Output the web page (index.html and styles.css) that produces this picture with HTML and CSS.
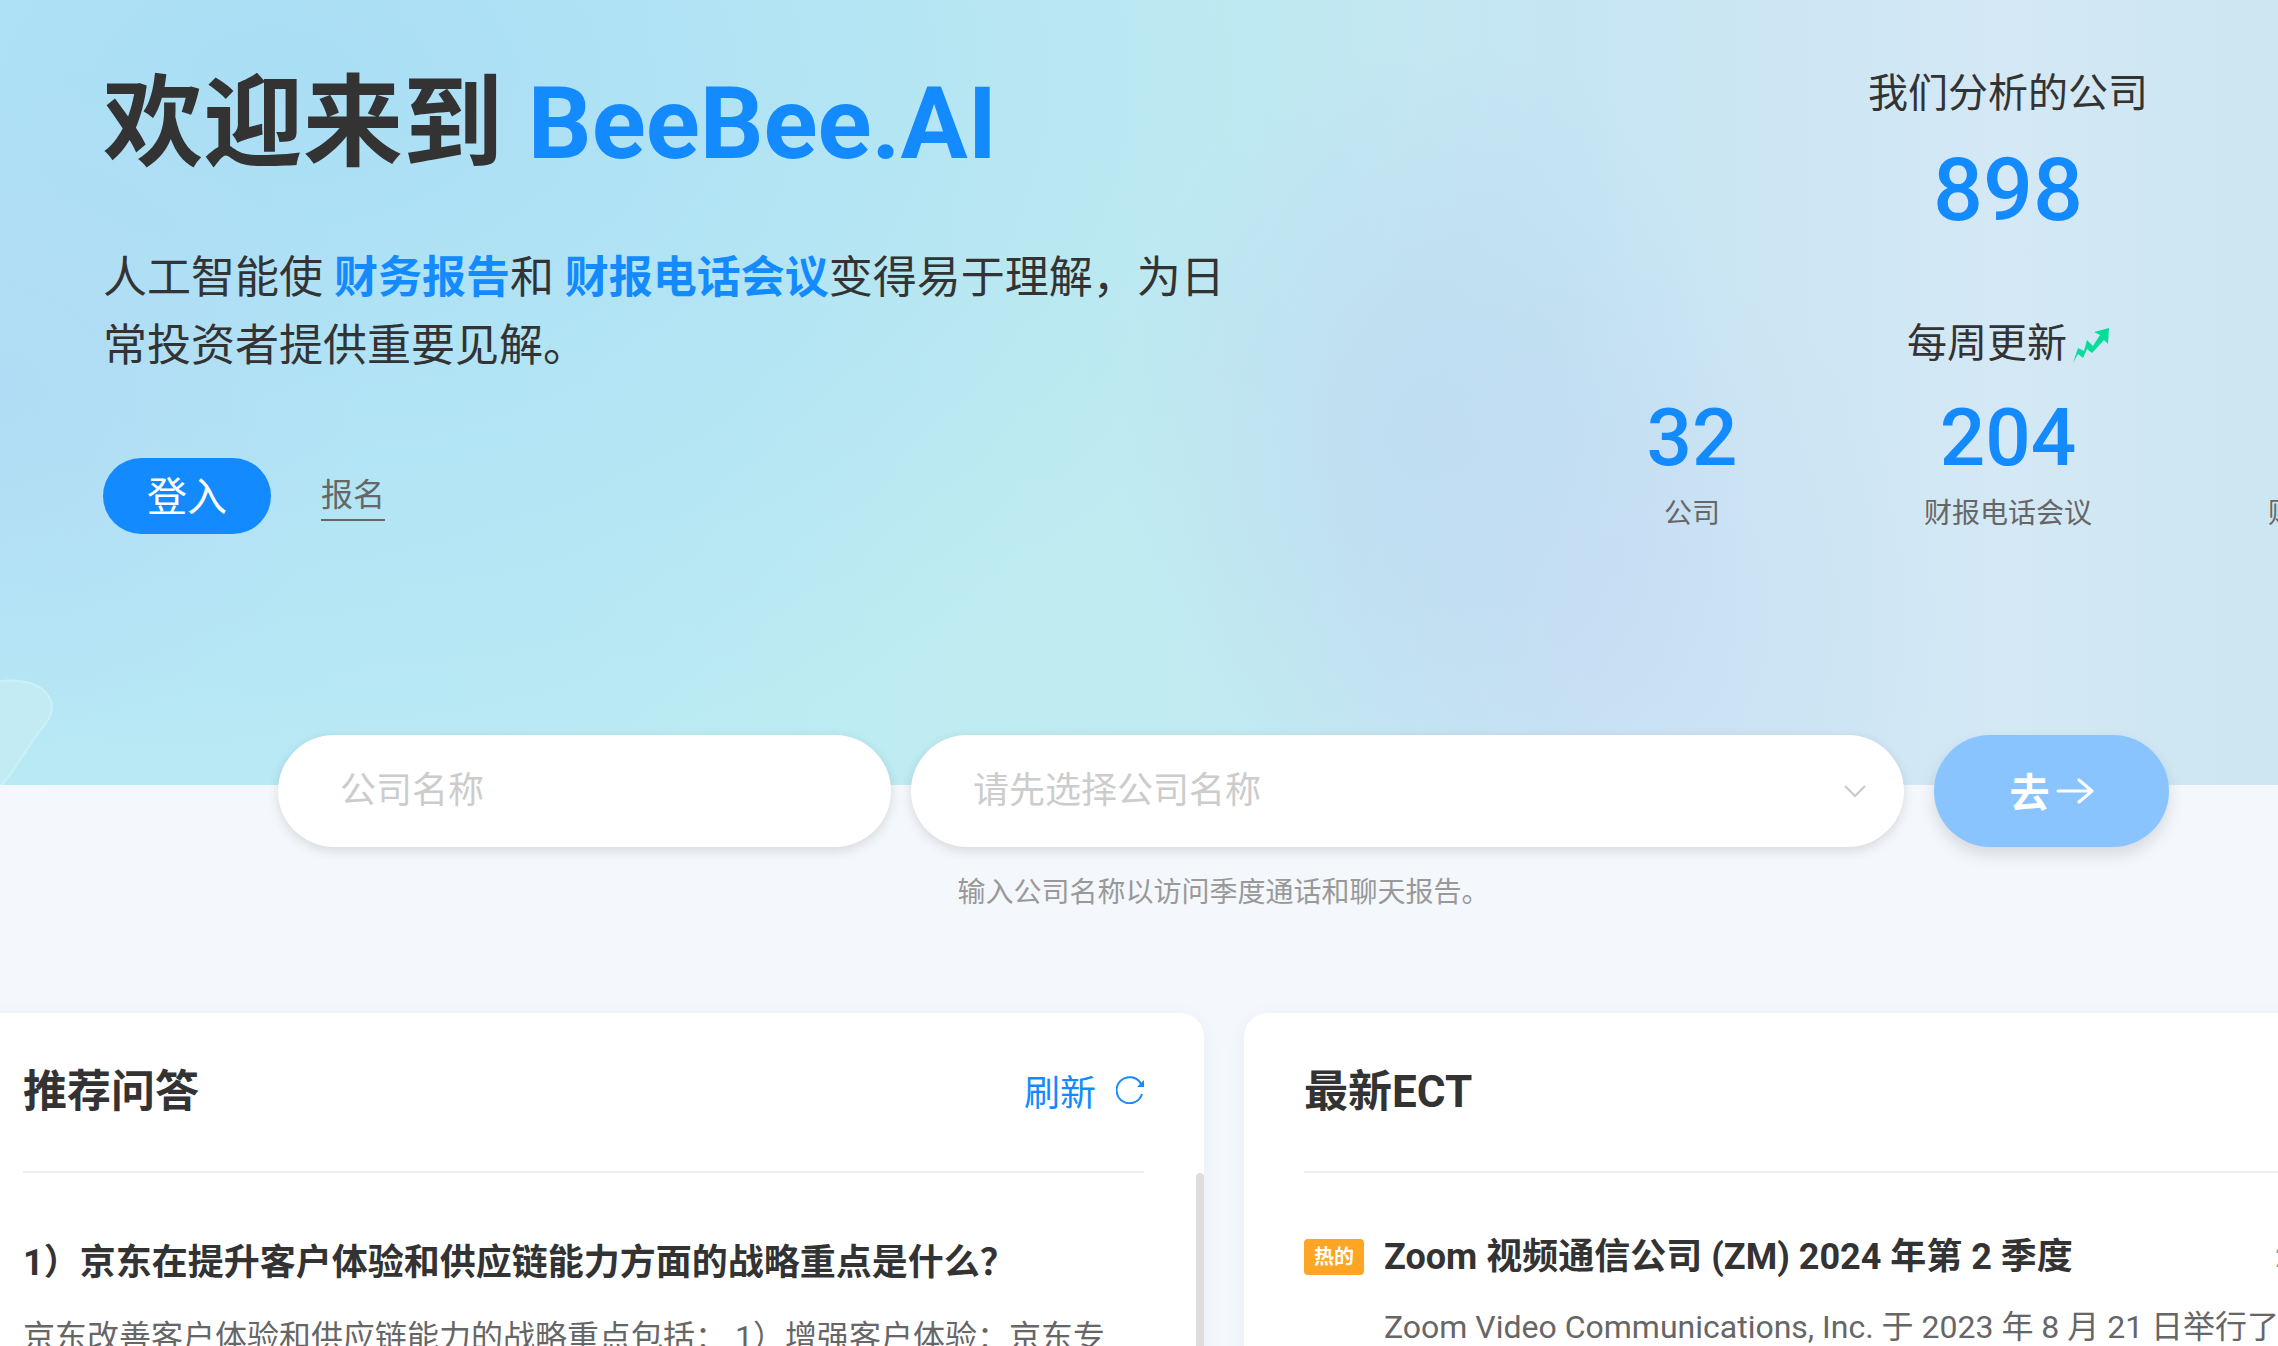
FILE: index.html
```
<!DOCTYPE html>
<html lang="zh-CN">
<head>
    <meta charset="UTF-8">
    <meta name="viewport" content="width=device-width, initial-scale=1.0">
    <title>BeeBee.AI</title>
    <link rel="stylesheet" href="styles.css">
</head>
<body>
    <header class="hero">
        <svg class="hero-shape" width="60" height="112" viewBox="0 0 60 112" aria-hidden="true">
            <path d="M-10 12 C2 6 16 7 26 9 C42 12 52 24 52 34 C52 46 42 54 34 66 C22 84 12 100 2 112 L-10 114 Z" fill="#c3ebf4" stroke="#c9f2f8" stroke-width="2"/>
        </svg>
        <div class="intro">
            <h1>欢迎来到 <span>BeeBee.AI</span></h1>
            <p class="lead">人工智能使 <b>财务报告</b>和 <b>财报电话会议</b>变得易于理解，为日常投资者提供重要见解。</p>
            <div class="actions">
                <button class="login" type="button">登入</button>
                <a class="signup" href="#">报名</a>
            </div>
        </div>
        <div class="stats">
            <p class="stats-title">我们分析的公司</p>
            <p class="stats-total">898</p>
            <p class="stats-title weekly">每周更新
                <svg width="36" height="40" viewBox="0 0 36 40" aria-hidden="true">
                    <path d="M0 39 L5 24 L11 27 L14 16 L20 22 L27 11 L21 8 L36 4 L35 20 L31 16 L19 29 L14 25 L10 34 L5 30 Z" fill="#06dd98"/>
                </svg>
            </p>
            <ul class="stats-list">
                <li><strong>32</strong>公司</li>
                <li><strong>204</strong>财报电话会议</li>
                <li><strong></strong>财务报告</li>
            </ul>
        </div>
    </header>

    <form class="search">
        <div class="search-row">
            <input class="field" type="text" placeholder="公司名称" aria-label="公司名称">
            <div class="select-wrap">
                <select class="field" aria-label="请先选择公司名称">
                    <option>请先选择公司名称</option>
                </select>
                <svg class="chevron" width="24" height="14" viewBox="0 0 24 14" aria-hidden="true">
                    <path d="M2 2 L12 12 L22 2" fill="none" stroke="#c8c8c8" stroke-width="2"/>
                </svg>
            </div>
            <button class="go" type="submit">去
                <svg width="38" height="28" viewBox="0 0 38 28" aria-hidden="true">
                    <path d="M2 15 H36 M23 4 L36 15 L23 26" fill="none" stroke="#fff" stroke-width="3" stroke-linecap="round" stroke-linejoin="round"/>
                </svg>
            </button>
        </div>
        <p class="hint">输入公司名称以访问季度通话和聊天报告。</p>
    </form>

    <main class="cards">
        <section class="card">
            <div class="card-head">
                <h2>推荐问答</h2>
                <button class="refresh" type="button">刷新
                    <svg width="28" height="28" viewBox="0 0 28 28" aria-hidden="true">
                        <path d="M26 18 A13 13 0 1 1 25 8" fill="none" stroke="#148aff" stroke-width="2"/>
                        <path d="M28 4 V11 H21 Z" fill="#148aff"/>
                    </svg>
                </button>
            </div>
            <div class="scroll-thumb"></div>
            <article class="question">
                <h3>1）京东在提升客户体验和供应链能力方面的战略重点是什么？</h3>
                <p>京东改善客户体验和供应链能力的战略重点包括： 1）增强客户体验：京东专</p>
            </article>
        </section>

        <section class="card">
            <div class="card-head">
                <h2>最新ECT</h2>
            </div>
            <article class="call">
                <span class="badge">热的</span>
                <div class="call-body">
                    <div class="call-top">
                        <h3>Zoom 视频通信公司 (ZM) 2024 年第 2 季度</h3>
                        <time>2</time>
                    </div>
                    <p>Zoom Video Communications, Inc. 于 2023 年 8 月 21 日举行了</p>
                </div>
            </article>
        </section>
    </main>
</body>
</html>
```
FILE: styles.css
```
* {
    margin: 0;
    padding: 0;
    box-sizing: border-box;
}

body {
    height: 100vh;
    overflow: hidden;
    background-color: #f4f7fc;
    color: #333;
    font-family: Roboto, "Noto Sans CJK SC", sans-serif;
    display: flex;
    flex-direction: column;
}

button,
input,
select {
    font-family: inherit;
    border: none;
    outline: none;
}

/* Hero */
.hero {
    position: relative;
    flex: none;
    display: flex;
    justify-content: space-between;
    padding: 66px 0 251px 103px;
    background:
        radial-gradient(ellipse 16% 45% at 0% 50%, rgba(178, 218, 245, 0.8), rgba(178, 218, 245, 0) 100%),
        radial-gradient(ellipse 14% 50% at 63% 55%, rgba(190, 218, 241, 0.8), rgba(190, 218, 241, 0) 100%),
        radial-gradient(ellipse 14% 45% at 71% 78%, rgba(203, 221, 245, 0.7), rgba(203, 221, 245, 0) 100%),
        radial-gradient(ellipse 50% 90% at 12% 10%, rgba(170, 222, 245, 1), rgba(170, 222, 245, 0) 100%),
        linear-gradient(90deg, #b8e9f5 0%, #b9eaf4 25%, #bfecf0 45%, #c1eaf1 55%, #c5e5f3 68%, #d4e8f5 88%, #cce7f2 100%);
}

.hero-shape {
    position: absolute;
    left: 0;
    bottom: 0;
}

.intro {
    width: 1132px;
}

h1 {
    font-size: 100px;
    line-height: 116px;
    font-weight: 700;
}

h1 span,
.lead b {
    color: #148aff;
}

.lead {
    margin-top: 62px;
    font-size: 44px;
    line-height: 68px;
}

.actions {
    display: flex;
    align-items: center;
    gap: 50px;
    margin-top: 78px;
}

.login {
    width: 168px;
    height: 76px;
    padding-bottom: 4px;
    border-radius: 38px;
    background-color: #148aff;
    color: #fff;
    font-size: 40px;
}

.signup {
    color: #666;
    font-size: 32px;
    line-height: 48px;
    border-bottom: 2px solid #666;
    text-decoration: none;
}

.stats {
    flex: none;
    width: 948px;
    margin-right: -204px;
    text-align: center;
}

.stats-title {
    font-size: 40px;
    line-height: 56px;
}

.stats-total {
    margin-top: 16px;
    color: #148aff;
    font-size: 88px;
    line-height: 104px;
    font-weight: 500;
}

.weekly {
    display: flex;
    justify-content: center;
    align-items: center;
    gap: 6px;
    margin-top: 74px;
}

.stats-list {
    display: grid;
    grid-template-columns: repeat(3, 1fr);
    margin-top: 18px;
    list-style: none;
    color: #666;
    font-size: 28px;
    line-height: 40px;
}

.stats-list strong {
    display: block;
    height: 104px;
    color: #148aff;
    font-size: 80px;
    line-height: 96px;
    font-weight: 500;
}

/* Search */
.search {
    position: relative;
    flex: none;
    margin-top: -50px;
    padding: 0 109px 0 278px;
}

.search-row {
    display: grid;
    grid-template-columns: 613fr 1003fr 235px;
    column-gap: 20px;
}

.field {
    width: 100%;
    height: 112px;
    padding: 0 62px;
    border-radius: 56px;
    background-color: #fff;
    box-shadow: 0 4px 12px rgba(0, 0, 0, 0.12);
    color: #ccc;
    font-size: 36px;
    appearance: none;
}

.field::placeholder {
    color: #ccc;
}

.select-wrap {
    position: relative;
    margin-right: 10px;
}

.chevron {
    position: absolute;
    right: 37px;
    top: 49px;
}

.go {
    display: flex;
    justify-content: center;
    align-items: center;
    gap: 6px;
    height: 112px;
    padding-bottom: 2px;
    border-radius: 56px;
    background-color: #89c4ff;
    box-shadow: 0 8px 16px rgba(0, 0, 0, 0.12);
    color: #fff;
    font-size: 40px;
    font-weight: 700;
}

.hint {
    margin-top: 26px;
    color: #999;
    font-size: 28px;
    line-height: 40px;
    text-align: center;
}

/* Cards */
.cards {
    flex: 1;
    display: grid;
    grid-template-columns: 1fr 1fr;
    gap: 40px;
    margin: 100px -207px 0 -37px;
}

.card {
    position: relative;
    min-width: 0;
    padding: 0 60px;
    border-radius: 24px 24px 0 0;
    background-color: #fff;
    box-shadow: 0 4px 20px rgba(20, 80, 160, 0.05);
    white-space: nowrap;
}

.card-head {
    display: flex;
    justify-content: space-between;
    align-items: center;
    height: 160px;
    border-bottom: 2px solid #f0f0f0;
}

h2 {
    font-size: 44px;
    line-height: 64px;
}

.refresh {
    display: flex;
    align-items: center;
    gap: 20px;
    padding-bottom: 4px;
    background: none;
    color: #148aff;
    font-size: 36px;
}

.scroll-thumb {
    position: absolute;
    top: 160px;
    right: 0;
    bottom: 0;
    width: 8px;
    border-radius: 4px 4px 0 0;
    background-color: #ddd;
}

h3 {
    font-size: 36px;
    line-height: 52px;
}

.question {
    padding-top: 64px;
}

.question p {
    margin-top: 24px;
    color: #666;
    font-size: 32px;
    line-height: 48px;
}

.call {
    display: flex;
    gap: 20px;
    padding-top: 58px;
}

.badge {
    width: 60px;
    height: 36px;
    margin-top: 8px;
    border-radius: 4px;
    background-color: #ffa524;
    color: #fff;
    font-size: 20px;
    line-height: 36px;
    font-weight: 700;
    text-align: center;
}

.call-body {
    flex: 1;
}

.call-body p {
    margin-top: 20px;
    color: #666;
    font-size: 32px;
    line-height: 48px;
}

.call-top {
    display: flex;
    justify-content: space-between;
    align-items: center;
}

.call-top time {
    width: 150px;
    color: #999;
    font-size: 28px;
}
```
